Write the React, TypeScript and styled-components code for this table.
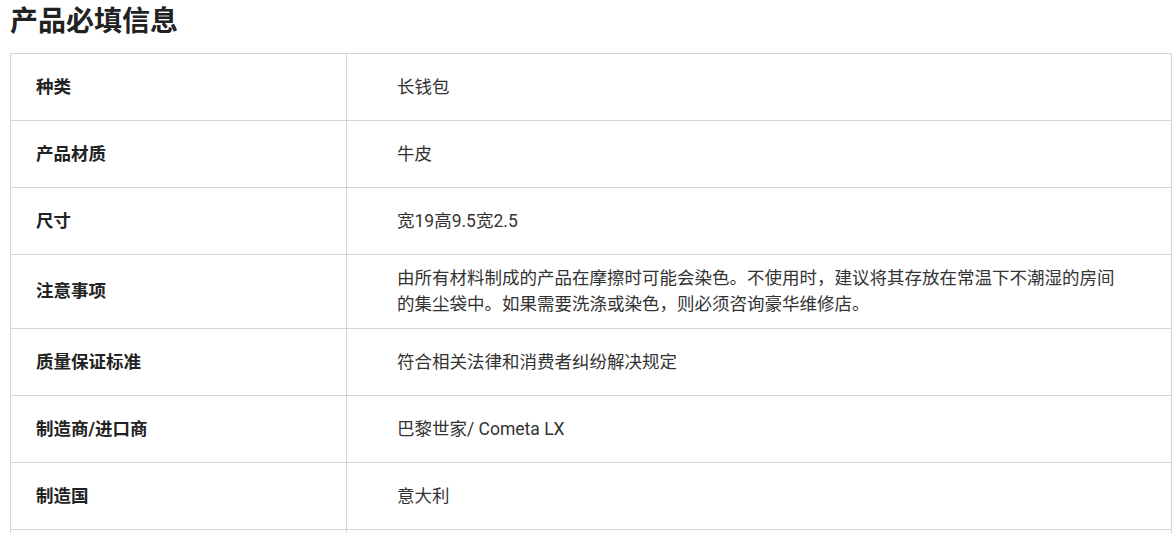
import styled, { createGlobalStyle } from 'styled-components';

const GlobalStyle = createGlobalStyle`
  html, body {
    margin: 0;
    padding: 0;
    background: #fff;
  }
  body {
    font-family: Roboto, "Noto Sans CJK SC", "Noto Sans", sans-serif;
    color: #333;
    overflow: hidden;
  }
`;

const rows: { label: string; value: string }[] = [
  { label: '种类', value: '长钱包' },
  { label: '产品材质', value: '牛皮' },
  { label: '尺寸', value: '宽19高9.5宽2.5' },
  {
    label: '注意事项',
    value:
      '由所有材料制成的产品在摩擦时可能会染色。不使用时，建议将其存放在常温下不潮湿的房间的集尘袋中。如果需要洗涤或染色，则必须咨询豪华维修店。',
  },
  { label: '质量保证标准', value: '符合相关法律和消费者纠纷解决规定' },
  { label: '制造商/进口商', value: '巴黎世家/ Cometa LX' },
  { label: '制造国', value: '意大利' },
];

export default function App() {
  return (
    <>
      <GlobalStyle />
      <Section>
        <Title>产品必填信息</Title>
        <InfoTable>
          <colgroup>
            <col style={{ width: 336 }} />
            <col />
          </colgroup>
          <tbody>
            {rows.map(row => (
              <tr key={row.label}>
                <Label>{row.label}</Label>
                <Value>{row.value}</Value>
              </tr>
            ))}
            {/* next row starts below the fold */}
            <tr>
              <Label />
              <Value />
            </tr>
          </tbody>
        </InfoTable>
      </Section>
    </>
  );
}

const Section = styled.section`
  padding: 0 0 0 10px;
`;

const Title = styled.h2`
  margin: 0 0 9px;
  height: 44px;
  line-height: 44px;
  font-size: 28px;
  font-weight: 700;
  color: #222;
`;

const InfoTable = styled.table`
  width: 1162px;
  border-collapse: collapse;
  table-layout: fixed;
`;

const Label = styled.th`
  height: 45px;
  padding: 10px 25px 11px 25px;
  border: 1px solid #d4d4d4;
  text-align: left;
  vertical-align: middle;
  font-size: 17.5px;
  line-height: 26px;
  font-weight: 700;
  color: #222;
`;

const Value = styled.td`
  height: 45px;
  padding: 10px 50px 11px 50px;
  border: 1px solid #d4d4d4;
  vertical-align: middle;
  font-size: 17.5px;
  line-height: 26px;
  color: #333;
`;
